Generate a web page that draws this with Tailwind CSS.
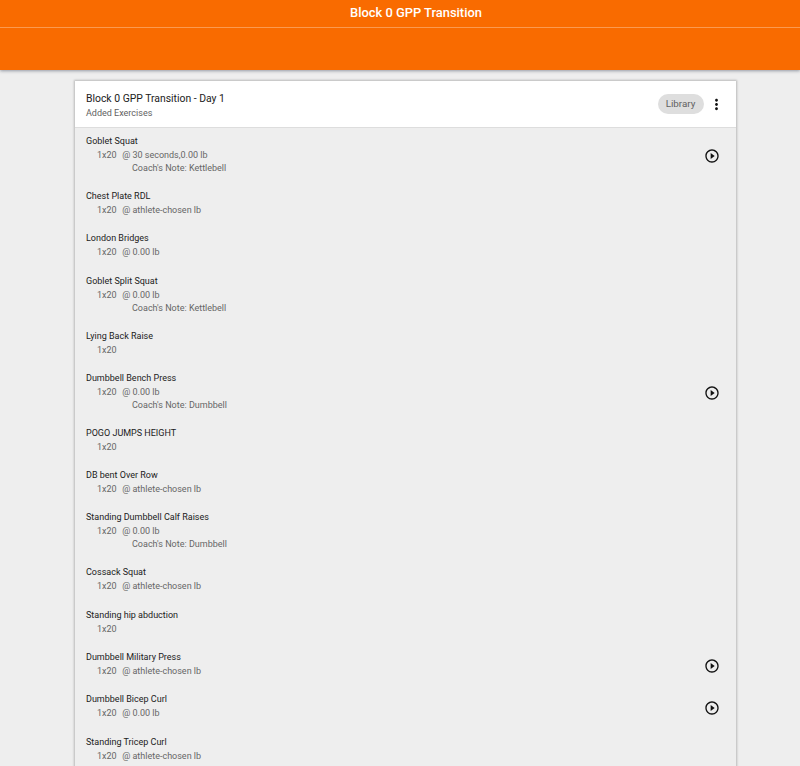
<!DOCTYPE html>
<html lang="en">
<head>
    <meta charset="UTF-8">
    <title>Block 0 GPP Transition</title>
    <script src="https://cdn.jsdelivr.net/npm/@tailwindcss/browser@4"></script>
</head>
<body class="bg-[#eeeeee] font-['Roboto',sans-serif] h-[766px] overflow-hidden">
    <!-- Toolbar -->
    <div class="h-[70px] bg-[#f96b00] shadow-[0_1px_3px_rgba(60,70,90,0.5)] relative">
        <div class="h-[28px] border-b border-[#fb9a50] flex items-center justify-center pb-[1px] pl-[32px] text-white text-[12.9px] font-medium">Block 0 GPP Transition</div>
    </div>

    <!-- Card -->
    <div class="ml-[75px] mt-[11px] w-[661px] shadow-[0_0_2px_1px_rgba(0,0,0,0.22)]">
        <div class="h-[47px] bg-white border-b border-[#dddddd] flex items-center pl-[11px] pr-[11px]">
            <div class="flex-1 pt-[1px]">
                <div class="text-[10.4px] leading-[15px] text-[#212121] pt-[1px]">Block 0 GPP Transition - Day 1</div>
                <div class="text-[9px] leading-[14px] text-[#616161]">Added Exercises</div>
            </div>
            <span class="h-[20px] w-[46px] rounded-full bg-[#dedede] text-[#616161] text-[9.8px] flex items-center justify-center">Library</span>
            <svg class="w-[17px] h-[17px] ml-[4.5px]" viewBox="0 0 24 24" fill="#111"><path d="M12 8c1.1 0 2-.9 2-2s-.9-2-2-2-2 .9-2 2 .9 2 2 2zm0 2c-1.1 0-2 .9-2 2s.9 2 2 2 2-.9 2-2-.9-2-2-2zm0 6c-1.1 0-2 .9-2 2s.9 2 2 2 2-.9 2-2-.9-2-2-2z"/></svg>
        </div>
        <div id="rows" class="pt-[6px] bg-[#eeeeee]"></div>
    </div>

    <script>
        const exercises = [
            { name: 'Goblet Squat', sets: '1x20', load: '@ 30 seconds,0.00 lb', note: 'Kettlebell', video: true },
            { name: 'Chest Plate RDL', sets: '1x20', load: '@ athlete-chosen lb' },
            { name: 'London Bridges', sets: '1x20', load: '@ 0.00 lb' },
            { name: 'Goblet Split Squat', sets: '1x20', load: '@ 0.00 lb', note: 'Kettlebell' },
            { name: 'Lying Back Raise', sets: '1x20' },
            { name: 'Dumbbell Bench Press', sets: '1x20', load: '@ 0.00 lb', note: 'Dumbbell', video: true },
            { name: 'POGO JUMPS HEIGHT', sets: '1x20' },
            { name: 'DB bent Over Row', sets: '1x20', load: '@ athlete-chosen lb' },
            { name: 'Standing Dumbbell Calf Raises', sets: '1x20', load: '@ 0.00 lb', note: 'Dumbbell' },
            { name: 'Cossack Squat', sets: '1x20', load: '@ athlete-chosen lb' },
            { name: 'Standing hip abduction', sets: '1x20' },
            { name: 'Dumbbell Military Press', sets: '1x20', load: '@ athlete-chosen lb', video: true },
            { name: 'Dumbbell Bicep Curl', sets: '1x20', load: '@ 0.00 lb', video: true },
            { name: 'Standing Tricep Curl', sets: '1x20', load: '@ athlete-chosen lb' }
        ];

        const playIcon = `<svg class="w-[16px] h-[16px]" viewBox="0 0 24 24" fill="#111"><path d="M10 16.5l6-4.5-6-4.5v9zM12 2C6.48 2 2 6.48 2 12s4.48 10 10 10 10-4.48 10-10S17.52 2 12 2zm0 18c-4.41 0-8-3.59-8-8s3.59-8 8-8 8 3.59 8 8-3.59 8-8 8z"/></svg>`;

        document.getElementById('rows').innerHTML = exercises.map(ex => `
            <div class="relative pl-[11px] ${ex.note ? 'h-[55px]' : 'h-[42.3px]'}">
                <div class="text-[9px] leading-[14px] text-[#212121]">${ex.name}</div>
                <div class="text-[9px] leading-[14px] text-[#666666] pl-[11px] whitespace-pre">${ex.sets}${ex.load ? `<span class="ml-[5.5px]">${ex.load}</span>` : ''}</div>
                ${ex.note ? `<div class="text-[9px] leading-[13px] text-[#666666] pl-[46px]">Coach's Note: ${ex.note}</div>` : ''}
                ${ex.video ? `<div class="absolute right-[16px] ${ex.note ? 'top-[14px]' : 'top-[8px]'}">${playIcon}</div>` : ''}
            </div>`).join('');
    </script>
</body>
</html>
